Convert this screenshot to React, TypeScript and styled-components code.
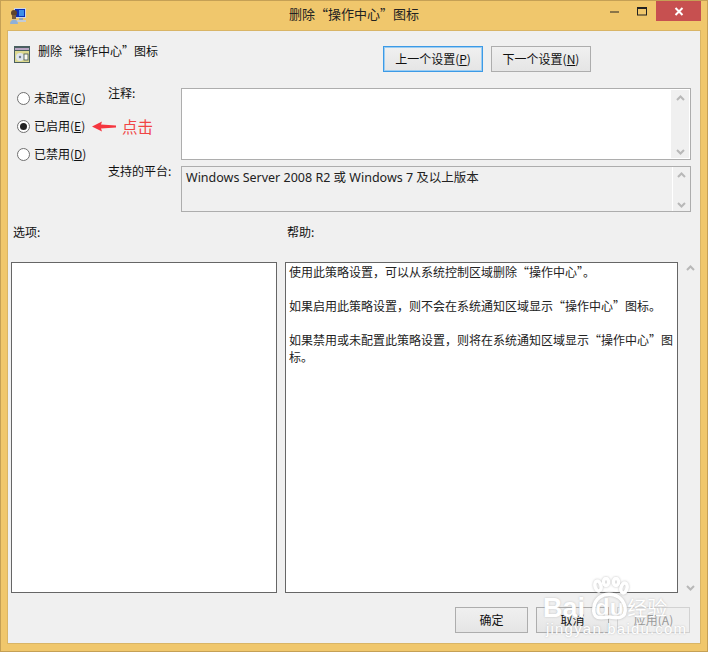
import React from "react";
import styled, { createGlobalStyle } from "styled-components";

const Global = createGlobalStyle`
  html, body { margin: 0; padding: 0; background: #f0c76c; }
  body { font-family: "Noto Sans CJK SC", "Liberation Sans", sans-serif; font-size: 12px; color: #111; }
  * { box-sizing: border-box; }
`;

const Frame = styled.div`
  position: relative;
  width: 708px;
  height: 652px;
  background: #f0c76c;
  border: 1px solid #c5a055;
  overflow: hidden;
`;

const TitleBar = styled.div`
  display: flex;
  align-items: center;
  height: 29px;
  padding-left: 9px;
`;

const Title = styled.div`
  flex: 1;
  text-align: center;
  font-size: 13px;
  line-height: 26px;
  padding: 0 0 3px 82px;
  color: #222;
`;

const WinButtons = styled.div`
  display: flex;
  align-self: flex-start;
  margin-right: 6px;
  height: 20px;
`;

const WinBtn = styled.div<{ $close?: boolean }>`
  width: ${(p) => (p.$close ? "45px" : "28px")};
  height: 20px;
  display: flex;
  align-items: center;
  justify-content: center;
  background: ${(p) => (p.$close ? "#c75050" : "transparent")};
`;

const Client = styled.div`
  margin-left: 6px;
  width: 694px;
  height: 614px;
  background: #f0f0f0;
  border: 1px solid #d9b566;
  padding: 0 0 0 3px;
  display: flex;
  flex-direction: column;
`;

const Header = styled.div`
  display: flex;
  height: 57px;
  padding: 15px 0 0 3px;
`;

const HeaderTitle = styled.div`
  display: flex;
  align-items: flex-start;
  gap: 8px;
  width: 369px;
  font-size: 12px;
  line-height: 13px;
  span { margin-top: -2px; }
`;

const NavButtons = styled.div`
  display: flex;
  gap: 8px;
`;

const Btn = styled.div<{ $focus?: boolean; $off?: boolean; $w?: number }>`
  width: ${(p) => p.$w ?? 100}px;
  height: 26px;
  display: flex;
  align-items: center;
  justify-content: center;
  padding-bottom: 2px;
  font-size: 12px;
  color: ${(p) => (p.$off ? "#9a9a9a" : "#111")};
  border: 1px solid ${(p) => (p.$focus ? "#3c9ae6" : p.$off ? "#d2d2d2" : "#adadad")};
  background: ${(p) => (p.$off ? "#efefef" : "linear-gradient(#f0f0f0, #e5e5e5)")};
  box-shadow: ${(p) => (p.$focus ? "inset 0 0 0 1px #9ccdf2" : "none")};
  white-space: pre;
  u { text-underline-offset: 1px; }
`;

const Settings = styled.div`
  display: grid;
  grid-template-columns: 97px 73px 510px;
  height: 124px;
`;

const Radios = styled.div`
  display: flex;
  flex-direction: column;
  gap: 10px;
  padding: 1px 0 0 6px;
`;

const RadioRow = styled.div`
  display: flex;
  align-items: center;
  gap: 4px;
  height: 18px;
  line-height: 18px;
  position: relative;
  white-space: nowrap;
`;

const RadioDot = styled.span<{ $on?: boolean }>`
  width: 13px;
  height: 13px;
  border-radius: 50%;
  border: 1px solid #707070;
  background: #fff;
  display: flex;
  align-items: center;
  justify-content: center;
  &::after {
    content: "";
    width: 7px;
    height: 7px;
    border-radius: 50%;
    background: ${(p) => (p.$on ? "#222" : "transparent")};
  }
`;

const Note = styled.div`
  position: absolute;
  left: 75px;
  top: 0;
  display: flex;
  align-items: center;
  gap: 6px;
  color: #f04545;
  font-size: 15.5px;
  line-height: 18px;
`;

const Labels = styled.div`
  display: flex;
  flex-direction: column;
  gap: 62px;
  font-size: 12px;
  line-height: 16px;
  margin-top: -3px;
`;

const Boxes = styled.div`
  display: flex;
  flex-direction: column;
  gap: 6px;
`;

const TextBox = styled.div<{ $h: number; $grey?: boolean }>`
  height: ${(p) => p.$h}px;
  flex: none;
  display: flex;
  border: 1px solid #adadad;
  background: ${(p) => (p.$grey ? "#f0f0f0" : "#fff")};
  font-size: 12.5px;
  font-family: "Noto Sans", "Noto Sans CJK SC", sans-serif;
  color: #222;
`;

const BoxText = styled.div`
  flex: 1;
  padding: 4px 4px;
  line-height: 14px;
`;

const Track = styled.div<{ $line?: boolean }>`
  width: 18px;
  margin: ${(p) => (p.$line ? "0" : "1px 1px 1px 0")};
  border-left: ${(p) => (p.$line ? "1px solid #fff" : "none")};
  background: #f0f0f0;
  display: flex;
  flex-direction: column;
  justify-content: space-between;
  align-items: center;
  padding: 5px 0 3px;
`;

const OptionHeads = styled.div`
  display: grid;
  grid-template-columns: 274px 1fr;
  height: 50px;
  padding: 12px 0 0 2px;
  line-height: 16px;
`;

const Panels = styled.div`
  display: grid;
  grid-template-columns: 266px 393px 18px;
  column-gap: 8px;
  height: 331px;
`;

const Pane = styled.div`
  border: 1px solid #666;
  background: #fff;
`;

const HelpPane = styled(Pane)`
  padding: 0 3px;
  font-size: 12px;
  line-height: 17px;
  color: #222;
  p { margin: 0 0 17px; }
`;

const OuterTrack = styled.div`
  display: flex;
  flex-direction: column;
  justify-content: space-between;
  align-items: center;
  width: 18px;
  margin-left: -5px;
  padding: 3px 0 2px;
`;

const Footer = styled.div`
  display: flex;
  justify-content: flex-end;
  gap: 8px;
  padding: 14px 0 0;
  margin-right: 10px;
`;

const Watermark = styled.div`
  position: absolute;
  left: 542px;
  top: 576px;
  width: 130px;
  height: 60px;
  pointer-events: none;
  color: #fff;
  text-shadow: 0 0 2px rgba(130, 130, 130, 0.45);
`;

const WmLine = styled.div`
  display: flex;
  align-items: center;
  height: 24px;
  margin-top: 19px;
  font-family: "Liberation Sans", sans-serif;
  font-weight: 700;
  font-size: 27px;
  line-height: 24px;
`;

const WmDu = styled.span`
  font-size: 24px;
  margin-left: 10px;
`;

const WmCn = styled.span`
  font-family: "Noto Sans CJK SC", sans-serif;
  font-size: 20px;
  font-weight: 400;
  margin-left: 3px;
`;

const WmUrl = styled.div`
  font-family: "Liberation Sans", sans-serif;
  font-size: 15px;
  letter-spacing: 1.2px;
  line-height: 16px;
  margin: 1px 0 0 3px;
  white-space: nowrap;
`;

const Paw = styled.svg`
  position: absolute;
  left: 46px;
  top: 0;
  filter: drop-shadow(0 0 1px rgba(130, 130, 130, 0.5));
`;

const Up = () => (
  <svg width="9" height="6" viewBox="0 0 9 6">
    <path d="M1 5 L4.5 1.5 L8 5" fill="none" stroke="#b8b8b8" strokeWidth="2" />
  </svg>
);

const Down = () => (
  <svg width="9" height="6" viewBox="0 0 9 6">
    <path d="M1 1 L4.5 4.5 L8 1" fill="none" stroke="#b8b8b8" strokeWidth="2" />
  </svg>
);

const AppIcon = () => (
  <svg width="16" height="18" viewBox="0 0 16 18">
    <rect x="4" y="1" width="12" height="10" fill="#cfd8e2" />
    <rect x="5" y="2" width="10" height="8" fill="#0d2fb5" />
    <rect x="9" y="3" width="5" height="6" fill="#3d8fe8" />
    <rect x="9" y="11" width="4" height="2" fill="#9aa6b5" />
    <rect x="7" y="13" width="9" height="2" fill="#c3ccd6" />
    <circle cx="4" cy="6" r="3" fill="#5f452c" />
    <rect x="2" y="8" width="4" height="4" fill="#7a5c3a" />
    <path d="M0 17 C0 11 8 11 8 17 Z" fill="#8fb0d8" />
  </svg>
);

const PolicyIcon = () => (
  <svg width="16" height="17" viewBox="0 0 16 17" style={{ flex: "none" }}>
    <rect x="0" y="0" width="16" height="17" fill="#4a5f60" />
    <rect x="1" y="2" width="14" height="2" fill="#b9a6c4" />
    <rect x="1" y="5" width="14" height="11" fill="#dcd98f" />
    <circle cx="6" cy="11" r="4" fill="#dfe6ee" />
    <circle cx="6" cy="11" r="1.2" fill="#6f7f8c" />
    <rect x="10" y="8" width="4" height="6" fill="#fbfbf0" stroke="#3f5355" strokeWidth="0.8" />
  </svg>
);

const Arrow = () => (
  <svg width="24" height="11" viewBox="0 0 24 11">
    <path d="M0 5.5 L10 0.5 L9 3.5 L24 4.5 L24 6.5 L9 7.5 L10 10.5 Z" fill="#f5363f" />
  </svg>
);

export default function App() {
  return (
    <Frame>
      <Global />
      <TitleBar>
        <AppIcon />
        <Title>删除“操作中心”图标</Title>
        <WinButtons>
          <WinBtn>
            <svg width="9" height="3" viewBox="0 0 9 3">
              <rect width="9" height="2" y="1" fill="#8a7548" />
            </svg>
          </WinBtn>
          <WinBtn>
            <svg width="11" height="9" viewBox="0 0 11 9">
              <rect x="0.5" y="1" width="9" height="7" fill="none" stroke="#222" strokeWidth="1" />
              <rect x="0" y="0" width="10" height="2" fill="#222" />
            </svg>
          </WinBtn>
          <WinBtn $close>
            <svg width="10" height="9" viewBox="0 0 10 9">
              <path d="M1.5 1 L8.5 8 M8.5 1 L1.5 8" stroke="#fff" strokeWidth="2" />
            </svg>
          </WinBtn>
        </WinButtons>
      </TitleBar>
      <Client>
        <Header>
          <HeaderTitle>
            <PolicyIcon />
            <span>删除“操作中心”图标</span>
          </HeaderTitle>
          <NavButtons>
            <Btn $focus><span>上一个设置(<u>P</u>)</span></Btn>
            <Btn><span>下一个设置(<u>N</u>)</span></Btn>
          </NavButtons>
        </Header>
        <Settings>
          <Radios>
            <RadioRow><RadioDot /><span>未配置(<u>C</u>)</span></RadioRow>
            <RadioRow>
              <RadioDot $on /><span>已启用(<u>E</u>)</span>
              <Note><Arrow />点击</Note>
            </RadioRow>
            <RadioRow><RadioDot /><span>已禁用(<u>D</u>)</span></RadioRow>
          </Radios>
          <Labels>
            <div>注释:</div>
            <div>支持的平台:</div>
          </Labels>
          <Boxes>
            <TextBox $h={72}>
              <BoxText />
              <Track><Up /><Down /></Track>
            </TextBox>
            <TextBox $h={46} $grey>
              <BoxText>Windows Server 2008 R2 或 Windows 7 及以上版本</BoxText>
              <Track $line><Up /><Down /></Track>
            </TextBox>
          </Boxes>
        </Settings>
        <OptionHeads>
          <div>选项:</div>
          <div>帮助:</div>
        </OptionHeads>
        <Panels>
          <Pane />
          <HelpPane>
            <p>使用此策略设置，可以从系统控制区域删除“操作中心”。</p>
            <p>如果启用此策略设置，则不会在系统通知区域显示“操作中心”图标。</p>
            <p>如果禁用或未配置此策略设置，则将在系统通知区域显示“操作中心”图标。</p>
          </HelpPane>
          <OuterTrack><Up /><Down /></OuterTrack>
        </Panels>
        <Footer>
          <Btn $w={73}>确定</Btn>
          <Btn $w={73}>取消</Btn>
          <Btn $w={73} $off>应用(A)</Btn>
        </Footer>
      </Client>
      <Watermark>
        <Paw width="40" height="44" viewBox="0 0 40 44">
          <g fill="none" stroke="#fff" strokeWidth="3.5">
            <ellipse cx="9" cy="9" rx="3" ry="5" transform="rotate(-15 9 9)" />
            <ellipse cx="17" cy="5" rx="2.5" ry="3.5" />
            <ellipse cx="27" cy="5" rx="2.5" ry="3.5" />
            <ellipse cx="35" cy="11" rx="3" ry="5" transform="rotate(15 35 11)" />
            <path d="M5 30 C7 14 32 12 36 30 C38 43 27 41 20 40 C12 41 3 43 5 30 Z" />
          </g>
        </Paw>
        <WmLine>Bai<WmDu>du</WmDu><WmCn>经验</WmCn></WmLine>
        <WmUrl>jingyan.baidu.com</WmUrl>
      </Watermark>
    </Frame>
  );
}
